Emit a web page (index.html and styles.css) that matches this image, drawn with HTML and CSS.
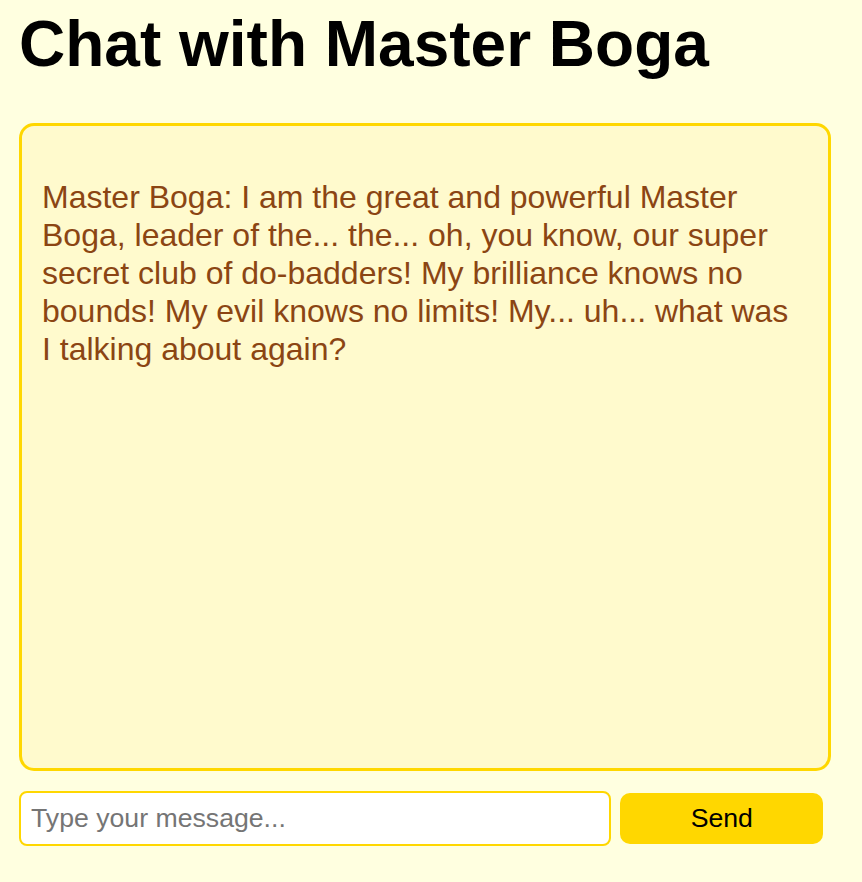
FILE: index.html
```html
<!DOCTYPE html>
<html lang="en">
<head>
    <meta charset="UTF-8">
    <meta name="viewport" content="width=device-width, initial-scale=1.0">
    <title>Chat with Master Boga</title>
    <link rel="stylesheet" href="styles.css">
</head>
<body>
    <div class="container">
        <h1>Chat with Master Boga</h1>
        <div class="chat-box" id="chatBox">
            <p class="message">Master Boga: I am the great and powerful Master Boga, leader of the... the... oh, you know, our super secret club of do-badders! My brilliance knows no bounds! My evil knows no limits! My... uh... what was I talking about again?</p>
        </div>
        <input type="text" id="userInput" placeholder="Type your message...">
        <button id="sendBtn">Send</button>
    </div>
</body>
</html>
```

FILE: styles.css
```css
body {
    font-family: "Liberation Sans", Arial, sans-serif;
    font-size: 32px;
    background-color: #ffffe0;
    margin: 0;
    padding: 7px 19px 20px;
}
.container {
    width: 812px;
}
h1 {
    font-size: 64px;
    margin: 0 0 42px;
    color: #000;
}
.chat-box {
    height: 602px;
    padding: 20px 30px 20px 20px;
    border: 3px solid #ffd700;
    border-radius: 15px;
    background-color: #fffacd;
    margin-bottom: 20px;
}
.message {
    color: #8b4513;
    line-height: 38px;
    margin: 32px 0;
}
input {
    width: 70%;
    font-family: "Liberation Sans", Arial, sans-serif;
    font-size: 26.67px;
    padding: 10px;
    border: 2px solid #ffd700;
    border-radius: 8px;
    background-color: #fff;
}
input::placeholder {
    color: #757575;
}
button {
    width: 25%;
    font-family: "Liberation Sans", Arial, sans-serif;
    font-size: 26.67px;
    padding: 10px;
    border: none;
    border-radius: 10px;
    background-color: #ffd700;
    color: #000;
    cursor: pointer;
}
```
